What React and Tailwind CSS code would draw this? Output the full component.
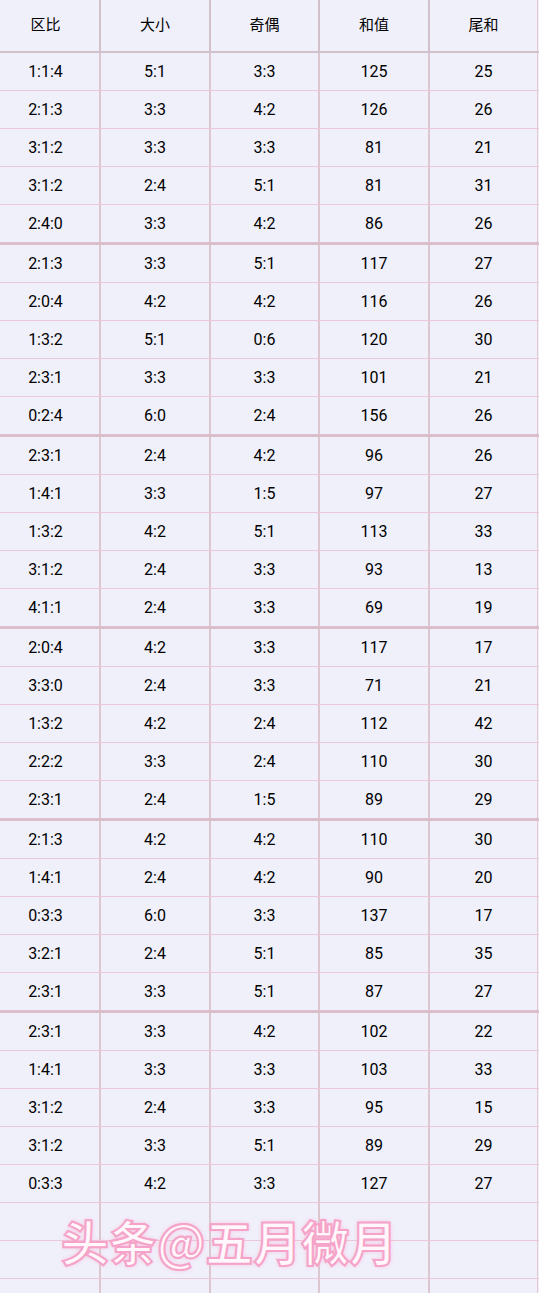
const groups = [
  [
    ['1:1:4', '5:1', '3:3', '125', '25'],
    ['2:1:3', '3:3', '4:2', '126', '26'],
    ['3:1:2', '3:3', '3:3', '81', '21'],
    ['3:1:2', '2:4', '5:1', '81', '31'],
    ['2:4:0', '3:3', '4:2', '86', '26'],
  ],
  [
    ['2:1:3', '3:3', '5:1', '117', '27'],
    ['2:0:4', '4:2', '4:2', '116', '26'],
    ['1:3:2', '5:1', '0:6', '120', '30'],
    ['2:3:1', '3:3', '3:3', '101', '21'],
    ['0:2:4', '6:0', '2:4', '156', '26'],
  ],
  [
    ['2:3:1', '2:4', '4:2', '96', '26'],
    ['1:4:1', '3:3', '1:5', '97', '27'],
    ['1:3:2', '4:2', '5:1', '113', '33'],
    ['3:1:2', '2:4', '3:3', '93', '13'],
    ['4:1:1', '2:4', '3:3', '69', '19'],
  ],
  [
    ['2:0:4', '4:2', '3:3', '117', '17'],
    ['3:3:0', '2:4', '3:3', '71', '21'],
    ['1:3:2', '4:2', '2:4', '112', '42'],
    ['2:2:2', '3:3', '2:4', '110', '30'],
    ['2:3:1', '2:4', '1:5', '89', '29'],
  ],
  [
    ['2:1:3', '4:2', '4:2', '110', '30'],
    ['1:4:1', '2:4', '4:2', '90', '20'],
    ['0:3:3', '6:0', '3:3', '137', '17'],
    ['3:2:1', '2:4', '5:1', '85', '35'],
    ['2:3:1', '3:3', '5:1', '87', '27'],
  ],
  [
    ['2:3:1', '3:3', '4:2', '102', '22'],
    ['1:4:1', '3:3', '3:3', '103', '33'],
    ['3:1:2', '2:4', '3:3', '95', '15'],
    ['3:1:2', '3:3', '5:1', '89', '29'],
    ['0:3:3', '4:2', '3:3', '127', '27'],
  ],
];

const headers = ['区比', '大小', '奇偶', '和值', '尾和'];
const cols = 'grid grid-cols-[101px_110px_109px_110px_108px]';

// thick: group divider, otherwise a thin pink rule
function Row({ cells, thick }) {
  return (
    <div
      className={`${cols} ${
        thick ? 'h-[40px] border-b-[3px] border-[#dcbdcc]' : 'h-[38px] border-b border-[#ebc8d7]'
      }`}
    >
      {cells.map((c, i) => (
        <div
          key={i}
          className={`flex items-center justify-center ${
            i === 4 ? 'border-r border-[#e6c6d5]' : 'border-r-2 border-[#dcc7d1]'
          } ${i === 0 ? 'pr-2' : ''}`}
        >
          {c}
        </div>
      ))}
    </div>
  );
}

export default function App() {
  return (
    <div className="relative h-[1293px] w-[539px] overflow-hidden bg-[#f0f0fb] text-[16px] text-black font-['Roboto','Noto_Sans_CJK_SC',sans-serif]">
      <div className={`${cols} h-[53px] border-b-2 border-[#d2c0cb]`}>
        {headers.map((h, i) => (
          <div
            key={h}
            className={`flex items-center justify-center text-[15px] ${
              i === 4 ? 'border-r border-[#e6c6d5]' : 'border-r-2 border-[#d2c0cb]'
            } ${i === 0 ? 'pr-2' : ''}`}
          >
            {h}
          </div>
        ))}
      </div>

      {groups.map((g, gi) => (
        <div key={gi}>
          {g.map((r, ri) => (
            <Row key={ri} cells={r} thick={ri === g.length - 1 && gi < groups.length - 1} />
          ))}
        </div>
      ))}

      {[0, 1, 2].map((i) => (
        <Row key={i} cells={['', '', '', '', '']} thick={false} />
      ))}

      {/* watermark */}
      <div className="pointer-events-none absolute left-[61px] top-[1213px] whitespace-nowrap text-[48px] leading-[54px] font-semibold text-[#fff7fb] font-['Noto_Sans_CJK_SC',sans-serif] [-webkit-text-stroke:2px_#f5a3c8] [text-shadow:0_0_5px_#f9b6d4]">
        头条@五月微月
      </div>
    </div>
  );
}
